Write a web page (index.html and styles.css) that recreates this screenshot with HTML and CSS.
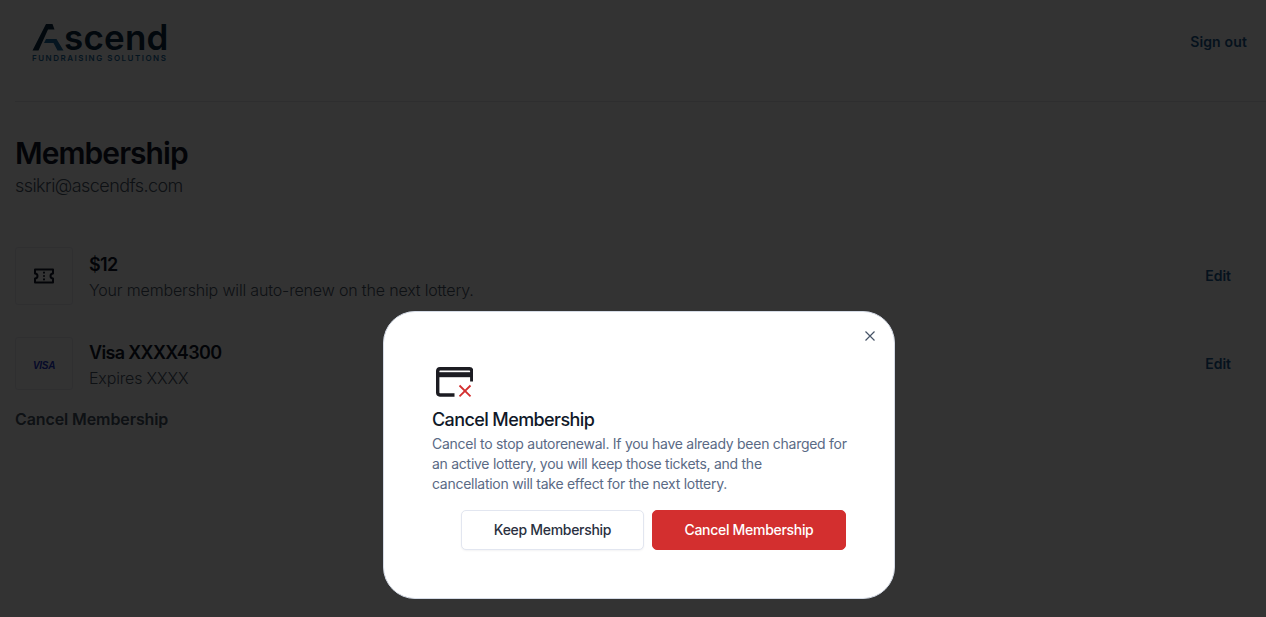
FILE: index.html
```html
<!DOCTYPE html>
<html lang="en">
<head>
<meta charset="utf-8">
<title>Membership</title>
<link rel="stylesheet" href="styles.css">
</head>
<body>
<div class="page">
  <header class="topbar">
    <div class="logo">
      <div class="logo-main">
        <svg class="logo-a" viewBox="0 0 32 28" aria-hidden="true">
          <path class="logo-dark" d="M0.500 27.500 L14 1 H20.500 L22.500 6.500 H16 L6.500 27.500 Z"/>
          <path class="logo-blue" d="M14 16 H24.500 L31.500 27.500 H25.500 L21.500 20 H12 Z"/>
        </svg>
        <span class="logo-word">scend</span>
      </div>
      <div class="logo-sub">FUNDRAISING SOLUTIONS</div>
    </div>
    <a class="signout">Sign out</a>
  </header>
  <main class="content">
    <h1 class="title">Membership</h1>
    <p class="email">ssikri@ascendfs.com</p>
    <section class="row row-first">
      <div class="thumb thumb-tall">
        <svg class="ticket" viewBox="0 0 22 18" aria-hidden="true">
          <path d="M2 2.500h18v4a2.500 2.500 0 0 0 0 5v4H2v-4a2.500 2.500 0 0 0 0-5z"/>
          <path class="ticket-dots" d="M11 5.500v.2M11 8.900v.2M11 12.300v.2"/>
        </svg>
      </div>
      <div class="info">
        <div class="info-title">$12</div>
        <div class="info-sub">Your membership will auto-renew on the next lottery.</div>
      </div>
      <a class="edit">Edit</a>
    </section>
    <section class="row row-second">
      <div class="thumb">
        <span class="visa">VISA</span>
      </div>
      <div class="info">
        <div class="info-title">Visa XXXX4300</div>
        <div class="info-sub">Expires XXXX</div>
      </div>
      <a class="edit">Edit</a>
    </section>
    <a class="cancel-link">Cancel Membership</a>
  </main>
</div>
<div class="overlay"></div>
<div class="modal" role="dialog">
  <svg class="close" viewBox="0 0 12 12" aria-hidden="true"><path d="M1.500 1.500l9 9M10.500 1.500l-9 9"/></svg>
  <svg class="card-x" viewBox="0 0 37 30" aria-hidden="true">
    <path class="card-body" d="M18.500 28H4A2.500 2.500 0 0 1 1.700 25.500V4A2.500 2.500 0 0 1 4 1.700H33.500A2.500 2.500 0 0 1 35.800 4V14.500"/>
    <rect class="card-band" x="2" y="5.200" width="33" height="5"/>
    <path class="card-cross" d="M23.500 18.500l11 10.800M34.500 18.500l-11 10.800"/>
  </svg>
  <h2 class="modal-title">Cancel Membership</h2>
  <p class="modal-text">Cancel to stop autorenewal. If you have already been charged for<br>an active lottery, you will keep those tickets, and the<br>cancellation will take effect for the next lottery.</p>
  <div class="actions">
    <button class="btn btn-keep">Keep Membership</button>
    <button class="btn btn-cancel">Cancel Membership</button>
  </div>
</div>
</body>
</html>
```
FILE: styles.css
```css
* { box-sizing: border-box; }
html, body { margin: 0; height: 100%; overflow: hidden; }
body { background: #fff; font-family: Inter, "Liberation Sans", sans-serif; color: #101828; }
.page { padding-left: 15px; }
.topbar { height: 102px; border-bottom: 1px solid #e4e7ec; display: flex; align-items: flex-start; justify-content: space-between; padding: 23px 19px 0 17px; }
.logo { width: 136px; }
.logo-main { display: flex; align-items: flex-end; height: 28px; }
.logo-a { width: 32px; height: 28px; flex: none; }
.logo-dark { fill: #0b2a44; }
.logo-blue { fill: #1a6a9e; }
.logo-word { font-family: Inter, sans-serif; font-weight: 600; font-size: 35px; line-height: 28px; color: #0b2a44; letter-spacing: .2px; }
.logo-sub { font-family: Inter, sans-serif; font-weight: 600; font-size: 8px; line-height: 8px; letter-spacing: 1.500px; color: #1a6a9e; margin-top: 3px; white-space: nowrap; }
.signout { font-size: 14px; font-weight: 600; color: #1a5a8f; margin-top: 10px; letter-spacing: .15px; }
.content { padding-top: 33px; }
.title { margin: 0; font-size: 30px; line-height: 36px; font-weight: 600; letter-spacing: -.95px; color: #101828; }
.email { margin: 2px 0 0; font-size: 18px; line-height: 26px; font-weight: 300; color: #475467; letter-spacing: -.56px; }
.row { display: flex; align-items: center; padding-right: 35px; }
.row-first { margin-top: 48px; }
.row-first .edit { margin-top: -2px; }
.row-second { margin-top: 32px; }
.thumb { width: 58px; height: 53px; border: 1px solid #eaecf0; border-radius: 3px; display: flex; align-items: center; justify-content: center; flex: none; }
.thumb-tall { height: 58px; }
.ticket { width: 22px; height: 18px; fill: none; stroke: #101828; stroke-width: 2; stroke-linejoin: round; stroke-linecap: round; }
.visa { font-family: "Liberation Sans", sans-serif; font-style: italic; font-weight: 700; font-size: 10px; color: #2233cc; letter-spacing: -.3px; margin-top: 3px; }
.info { margin-left: 16px; flex: 1; padding-top: 2px; }
.info-title { font-size: 18px; line-height: 26px; font-weight: 600; color: #101828; letter-spacing: -.65px; }
.info-sub { font-size: 16px; line-height: 24px; font-weight: 300; color: #475467; letter-spacing: -.16px; }
.edit { font-size: 14px; font-weight: 600; color: #1a5a8f; }
.cancel-link { display: block; margin-top: 17px; font-size: 16px; line-height: 24px; font-weight: 600; color: #475467; letter-spacing: -.1px; }
.overlay { position: fixed; inset: 0; background: rgba(0, 0, 0, .8); }
.modal { position: absolute; left: 383px; top: 311px; width: 512px; height: 288px; background: #fff; border: 1px solid #d5dbe6; border-radius: 32px; padding: 55px 48px 0; }
.close { position: absolute; right: 18px; top: 18px; width: 12px; height: 12px; fill: none; stroke: #475467; stroke-width: 1.200; }
.card-x { display: block; width: 37px; height: 30px; margin-left: 4px; }
.card-body { fill: none; stroke: #1c1c22; stroke-width: 3.400; }
.card-band { fill: #1c1c22; }
.card-cross { fill: none; stroke: #d32f2f; stroke-width: 1.800; }
.modal-title { margin: 10px 0 0; font-size: 18px; line-height: 26px; font-weight: 500; color: #101828; letter-spacing: -.6px; }
.modal-text { margin: 1px -6px 0 0; font-size: 14px; line-height: 20px; font-weight: 400; color: #5a6a85; letter-spacing: -.27px; }
.actions { display: flex; justify-content: flex-end; gap: 8px; margin-top: 16px; }
.btn { height: 40px; padding: 0 0 2px; border-radius: 5px; font-family: inherit; font-size: 14px; font-weight: 500; letter-spacing: -.3px; }
.btn-keep { width: 183px; background: #fff; border: 1px solid #e2e6f0; color: #2a3040; box-shadow: 0 1px 2px rgba(16, 24, 40, .05); }
.btn-cancel { width: 194px; background: #d32f2f; border: 1px solid #d32f2f; color: #fff; }
```
